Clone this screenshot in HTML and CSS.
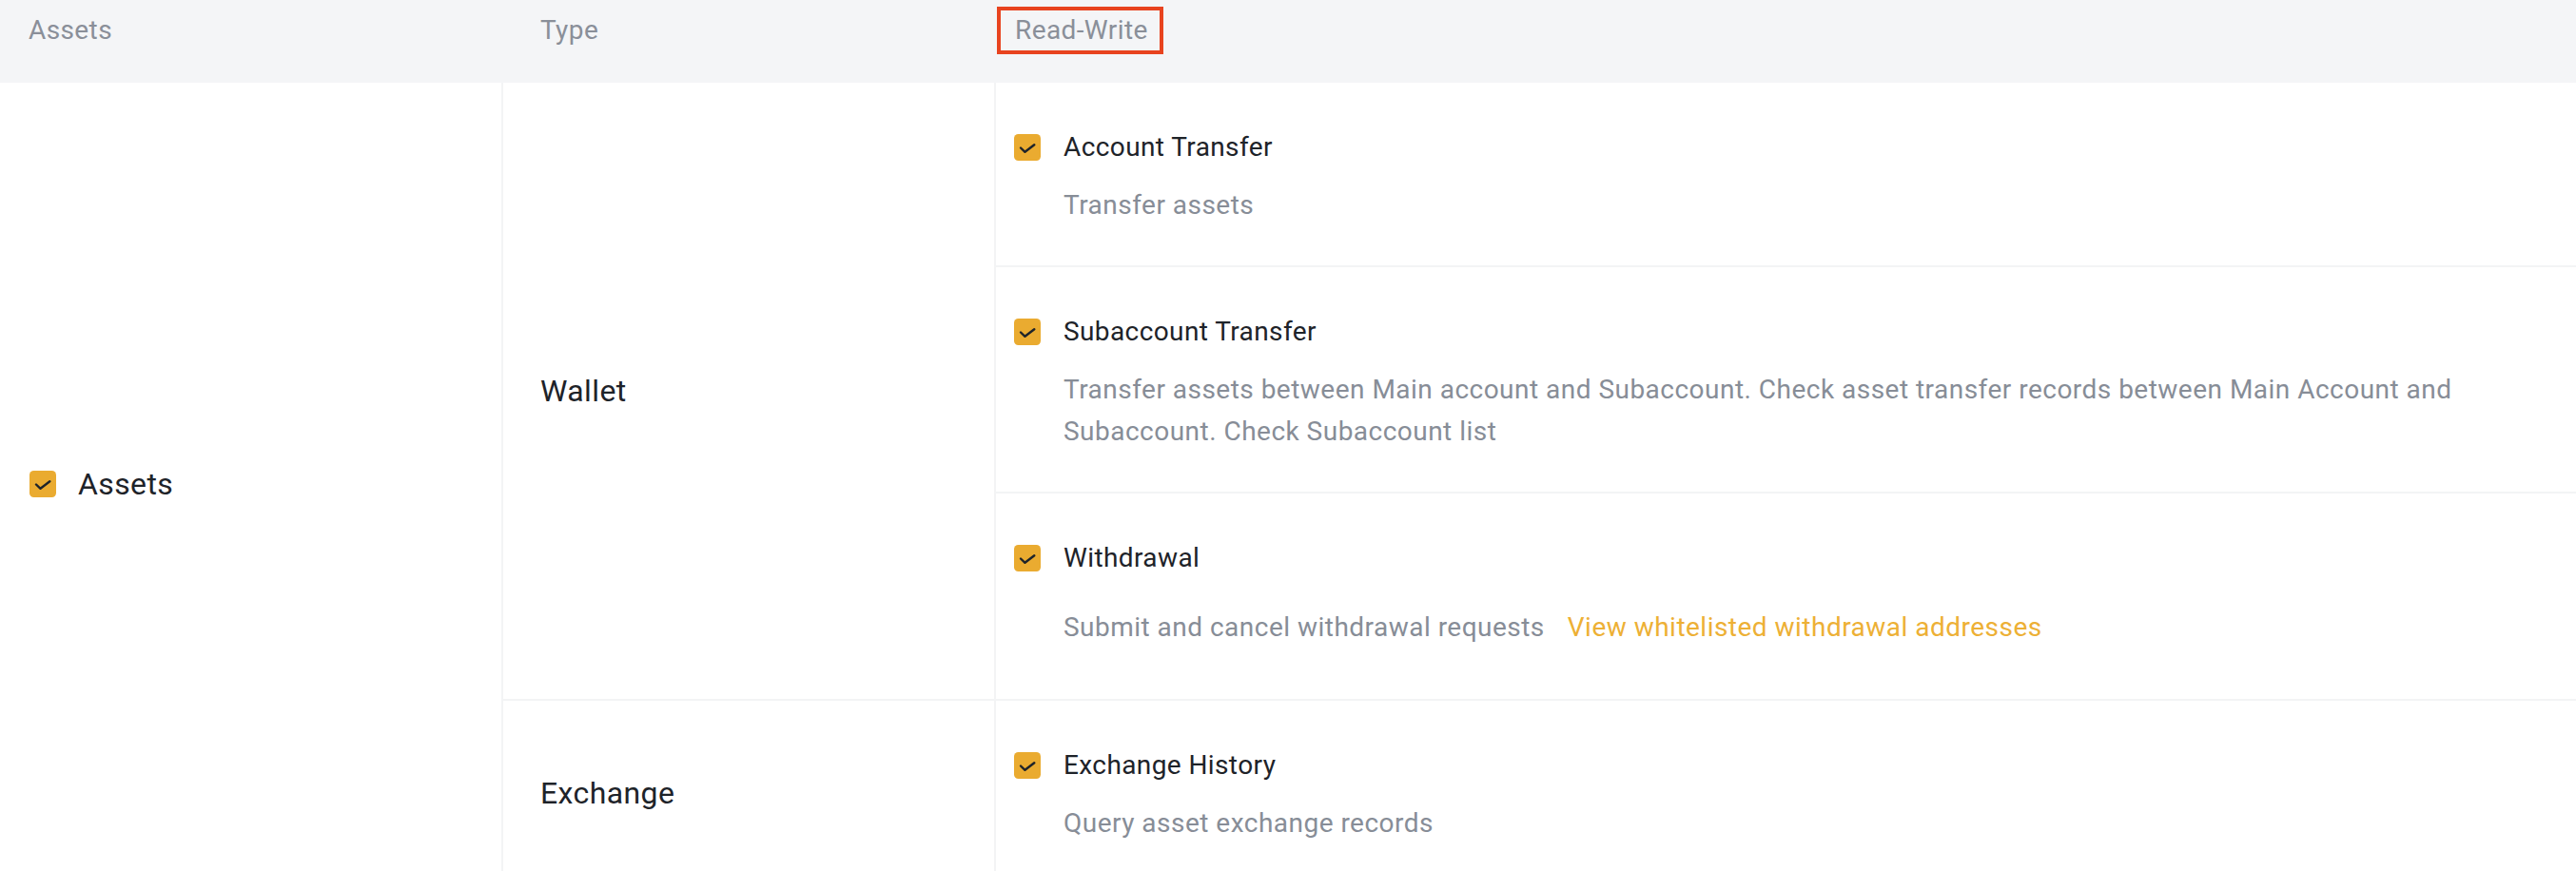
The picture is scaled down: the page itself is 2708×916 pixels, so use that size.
FILE: index.html
```html
<!DOCTYPE html>
<html lang="en">
<head>
<meta charset="utf-8">
<title>API permissions</title>
<link rel="stylesheet" href="styles.css">
</head>
<body>
<div class="table">
  <div class="thead">
    <div class="th th-asset">Assets</div>
    <div class="th th-type">Type</div>
    <div class="th th-rw"><span class="hl">Read-Write</span></div>
  </div>
  <div class="tbody">
    <div class="cell asset">
      <span class="cb"><svg viewBox="0 0 28 28" width="28" height="28"><rect width="28" height="28" rx="4.5" fill="#EAAB30"/><path d="M7 14.5 L11.5 18.8 L21.3 11.3" fill="none" stroke="#1E2329" stroke-width="2.4" stroke-linecap="round" stroke-linejoin="round"/></svg></span>
      <span class="big">Assets</span>
    </div>
    <div class="cell type wallet"><span class="big">Wallet</span></div>
    <div class="cell item">
      <div class="title"><span class="cb"><svg viewBox="0 0 28 28" width="28" height="28"><rect width="28" height="28" rx="4.5" fill="#EAAB30"/><path d="M7 14.5 L11.5 18.8 L21.3 11.3" fill="none" stroke="#1E2329" stroke-width="2.4" stroke-linecap="round" stroke-linejoin="round"/></svg></span>Account Transfer</div>
      <div class="desc">Transfer assets</div>
    </div>
    <div class="cell item">
      <div class="title"><span class="cb"><svg viewBox="0 0 28 28" width="28" height="28"><rect width="28" height="28" rx="4.5" fill="#EAAB30"/><path d="M7 14.5 L11.5 18.8 L21.3 11.3" fill="none" stroke="#1E2329" stroke-width="2.4" stroke-linecap="round" stroke-linejoin="round"/></svg></span>Subaccount Transfer</div>
      <div class="desc">Transfer assets between Main account and Subaccount. Check asset transfer records between Main Account and Subaccount. Check Subaccount list</div>
    </div>
    <div class="cell item">
      <div class="title"><span class="cb"><svg viewBox="0 0 28 28" width="28" height="28"><rect width="28" height="28" rx="4.5" fill="#EAAB30"/><path d="M7 14.5 L11.5 18.8 L21.3 11.3" fill="none" stroke="#1E2329" stroke-width="2.4" stroke-linecap="round" stroke-linejoin="round"/></svg></span>Withdrawal</div>
      <div class="desc desc-link">Submit and cancel withdrawal requests<a class="link" href="#">View whitelisted withdrawal addresses</a></div>
    </div>
    <div class="cell type exchange"><span class="big">Exchange</span></div>
    <div class="cell item">
      <div class="title"><span class="cb"><svg viewBox="0 0 28 28" width="28" height="28"><rect width="28" height="28" rx="4.5" fill="#EAAB30"/><path d="M7 14.5 L11.5 18.8 L21.3 11.3" fill="none" stroke="#1E2329" stroke-width="2.4" stroke-linecap="round" stroke-linejoin="round"/></svg></span>Exchange History</div>
      <div class="desc">Query asset exchange records</div>
    </div>
  </div>
</div>
</body>
</html>
```
FILE: styles.css
```css
html, body {
  margin: 0;
  padding: 0;
  background: #ffffff;
}
body {
  font-family: Roboto, "Liberation Sans", Arial, sans-serif;
  color: #1E2329;
  letter-spacing: 0.4px;
  overflow: hidden;
}
.table {
  width: 100%;
}
.thead {
  display: grid;
  grid-template-columns: 529px 518px 1fr;
  height: 87px;
  background: #F4F5F7;
}
.th {
  font-size: 28px;
  line-height: 40px;
  color: #8A8F99;
  padding-top: 12px;
}
.th-asset { padding-left: 30px; }
.th-type { padding-left: 39px; }
.th-rw { padding-left: 20px; }
.hl {
  position: relative;
  display: inline-block;
}
.hl::after {
  content: "";
  position: absolute;
  top: -5px;
  bottom: -5px;
  left: -19px;
  right: -16px;
  border: 4px solid #E8431F;
}
.tbody {
  display: grid;
  grid-template-columns: 529px 518px 1fr;
}
.cell {
  box-sizing: border-box;
}
.asset {
  grid-column: 1;
  grid-row: 1 / span 4;
  border-right: 2px solid #F3F4F5;
  display: flex;
  align-items: center;
  gap: 23px;
  padding-left: 31px;
}
.type {
  grid-column: 2;
  border-right: 2px solid #F3F4F5;
  display: flex;
  align-items: center;
  padding-left: 39px;
}
.wallet {
  grid-row: 1 / span 3;
  border-bottom: 2px solid #F3F4F5;
}
.exchange {
  grid-row: 4;
}
.big {
  font-size: 32px;
  line-height: 44px;
  color: #1E2329;
}
.item {
  grid-column: 3;
  padding: 48px 32px 41px 19px;
  border-bottom: 2px solid #F3F4F5;
}
.title {
  display: flex;
  align-items: center;
  gap: 24px;
  font-size: 28px;
  line-height: 40px;
  color: #1E2329;
}
.cb {
  display: inline-flex;
  width: 28px;
  height: 28px;
  flex: none;
}
.cb svg {
  display: block;
}
.desc {
  margin-top: 19px;
  padding-left: 52px;
  font-size: 28px;
  line-height: 44px;
  letter-spacing: 0.48px;
  color: #878D97;
}
.desc-link {
  line-height: 68px;
}
.link {
  color: #EDB035;
  text-decoration: none;
  margin-left: 24px;
}
```
